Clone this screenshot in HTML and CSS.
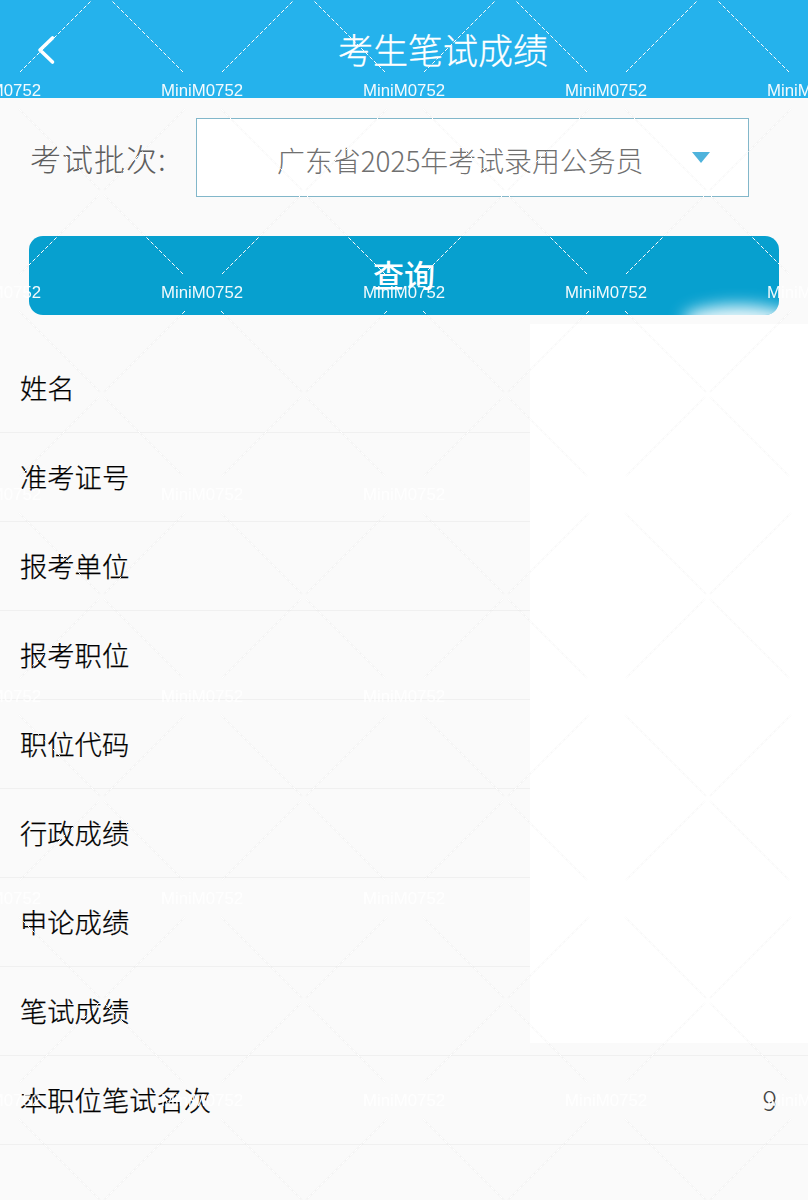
FILE: index.html
```html
<!DOCTYPE html>
<html lang="zh-CN">
<head>
<meta charset="utf-8">
<title>考生笔试成绩</title>
<link rel="stylesheet" href="styles.css">
</head>
<body>
<div class="screen">
  <header class="topbar">
    <a class="back" aria-label="返回">
      <svg class="back-icon" viewBox="0 0 20 30" width="20" height="30"><path d="M16.5 3 L4 15 L16.5 27"/></svg>
    </a>
    <h1 class="title">考生笔试成绩</h1>
  </header>

  <section class="filter">
    <label class="filter-label">考试批次:</label>
    <div class="select">
      <span class="select-value">广东省2025年考试录用公务员</span>
      <span class="select-caret"></span>
    </div>
  </section>

  <button class="query">查询</button>

  <ul class="rows">
    <li class="row">姓名</li>
    <li class="row">准考证号</li>
    <li class="row">报考单位</li>
    <li class="row">报考职位</li>
    <li class="row">职位代码</li>
    <li class="row">行政成绩</li>
    <li class="row">申论成绩</li>
    <li class="row">笔试成绩</li>
    <li class="row">本职位笔试名次<span class="row-value">9</span></li>
  </ul>

  <div class="redaction"></div>

  <svg class="wm-lines" width="808" height="1200" aria-hidden="true">
    <defs>
      <pattern id="wm-under" patternUnits="userSpaceOnUse" x="0" y="-10" width="202" height="202">
        <path class="wm-faint" d="M99 3 L20 82 M104 3 L183 82 M185 119 L104 200 M19 119 L100 200"/>
      </pattern>
      <pattern id="wm-over" patternUnits="userSpaceOnUse" x="0" y="-10" width="202" height="202">
        <path class="wm-dash" d="M99 3 L20 82 M104 3 L183 82 M185 119 L104 200 M19 119 L100 200"/>
      </pattern>
    </defs>
    <rect width="808" height="1200" fill="url(#wm-under)"/>
    <rect width="808" height="1200" fill="url(#wm-over)"/>
  </svg>

  <div class="wm-text" aria-hidden="true">
    <span>MiniM0752</span><span>MiniM0752</span><span>MiniM0752</span><span>MiniM0752</span><span>MiniM0752</span>
    <span>MiniM0752</span><span>MiniM0752</span><span>MiniM0752</span><span>MiniM0752</span><span>MiniM0752</span>
    <span>MiniM0752</span><span>MiniM0752</span><span>MiniM0752</span><span>MiniM0752</span><span>MiniM0752</span>
    <span>MiniM0752</span><span>MiniM0752</span><span>MiniM0752</span><span>MiniM0752</span><span>MiniM0752</span>
    <span>MiniM0752</span><span>MiniM0752</span><span>MiniM0752</span><span>MiniM0752</span><span>MiniM0752</span>
    <span>MiniM0752</span><span>MiniM0752</span><span>MiniM0752</span><span>MiniM0752</span><span>MiniM0752</span>
  </div>
</div>
</body>
</html>
```

FILE: styles.css
```css
* { box-sizing: border-box; }
html, body { margin: 0; padding: 0; background: #fafafa; }
body { font-family: "Noto Sans CJK SC", "Noto Sans", sans-serif; }

.screen {
  position: relative;
  width: 808px;
  height: 1200px;
  overflow: hidden;
  background: #fafafa;
}

.topbar {
  display: flex;
  align-items: center;
  height: 98px;
  background: #25b2ec;
}
.back {
  display: flex;
  flex: 0 0 78px;
  justify-content: flex-end;
  padding: 0 22px 0 0;
  margin-bottom: -1px;
}
.back-icon { fill: none; stroke: #fff; stroke-width: 3.6; stroke-linecap: round; stroke-linejoin: round; }
.title {
  flex: 1;
  margin: 0;
  text-align: center;
  font-size: 35px;
  font-weight: 300;
  -webkit-text-stroke: .3px #fff;
  line-height: 96px;
  color: #fff;
}

.filter {
  display: flex;
  align-items: center;
  padding: 20px 59px 0 30px;
}
.filter-label {
  flex: 0 0 166px;
  font-size: 31px;
  font-weight: 300;
  letter-spacing: 1px;
  line-height: 79px;
  color: #5e5e5e;
}
.select {
  flex: 1;
  display: flex;
  align-items: center;
  height: 79px;
  padding: 0 37px 0 80px;
  background: #fff;
  border: 1px solid #82b7ca;
}
.select-value {
  font-size: 27.9px;
  font-weight: 300;
  line-height: 84px;
  height: 79px;
  color: #707070;
  white-space: nowrap;
}
.select-caret {
  margin-left: auto;
  margin-right: 1px;
  width: 0;
  height: 0;
  border-left: 9.5px solid transparent;
  border-right: 9.5px solid transparent;
  border-top: 11px solid #4fb3dc;
}

.query {
  position: relative;
  display: block;
  width: 750px;
  height: 79px;
  margin: 39px 0 0 29px;
  padding: 0 0 3px;
  overflow: hidden;
  border: 0;
  border-radius: 14px;
  background: #07a0cf;
  color: #fff;
  font: 500 31px/76px "Noto Sans CJK SC", sans-serif;
}
.query::after {
  content: "";
  position: absolute;
  right: -14px;
  bottom: -20px;
  width: 110px;
  height: 30px;
  border-radius: 50%;
  background: #fff;
  filter: blur(8px);
  opacity: .9;
}

.rows {
  list-style: none;
  margin: 29px 0 0;
  padding: 0;
}
.row {
  display: flex;
  align-items: center;
  justify-content: space-between;
  height: 89px;
  padding: 0 31px 3px 20px;
  border-bottom: 1px solid #f0f0f0;
  font-size: 27.3px;
  font-weight: 300;
  -webkit-text-stroke: .25px #000;
  color: #000;
}
.row-value { color: #444; -webkit-text-stroke: 0; }

.redaction {
  position: absolute;
  left: 530px;
  top: 324px;
  width: 278px;
  height: 719px;
  background: #fff;
}

.wm-lines {
  position: absolute;
  left: 0;
  top: 0;
  pointer-events: none;
}
.wm-faint { fill: none; stroke: #000; stroke-opacity: .03; stroke-width: 1.2; }
.wm-dash { fill: none; stroke: #fff; stroke-width: 1; stroke-dasharray: 4 2; }

.wm-text {
  position: absolute;
  left: -41px;
  top: -10px;
  display: grid;
  grid-template-columns: repeat(5, 202px);
  grid-auto-rows: 202px;
  align-items: center;
  pointer-events: none;
  font: 400 16.8px/20px "Liberation Sans", sans-serif;
  color: #fff;
  opacity: .95;
}
```
